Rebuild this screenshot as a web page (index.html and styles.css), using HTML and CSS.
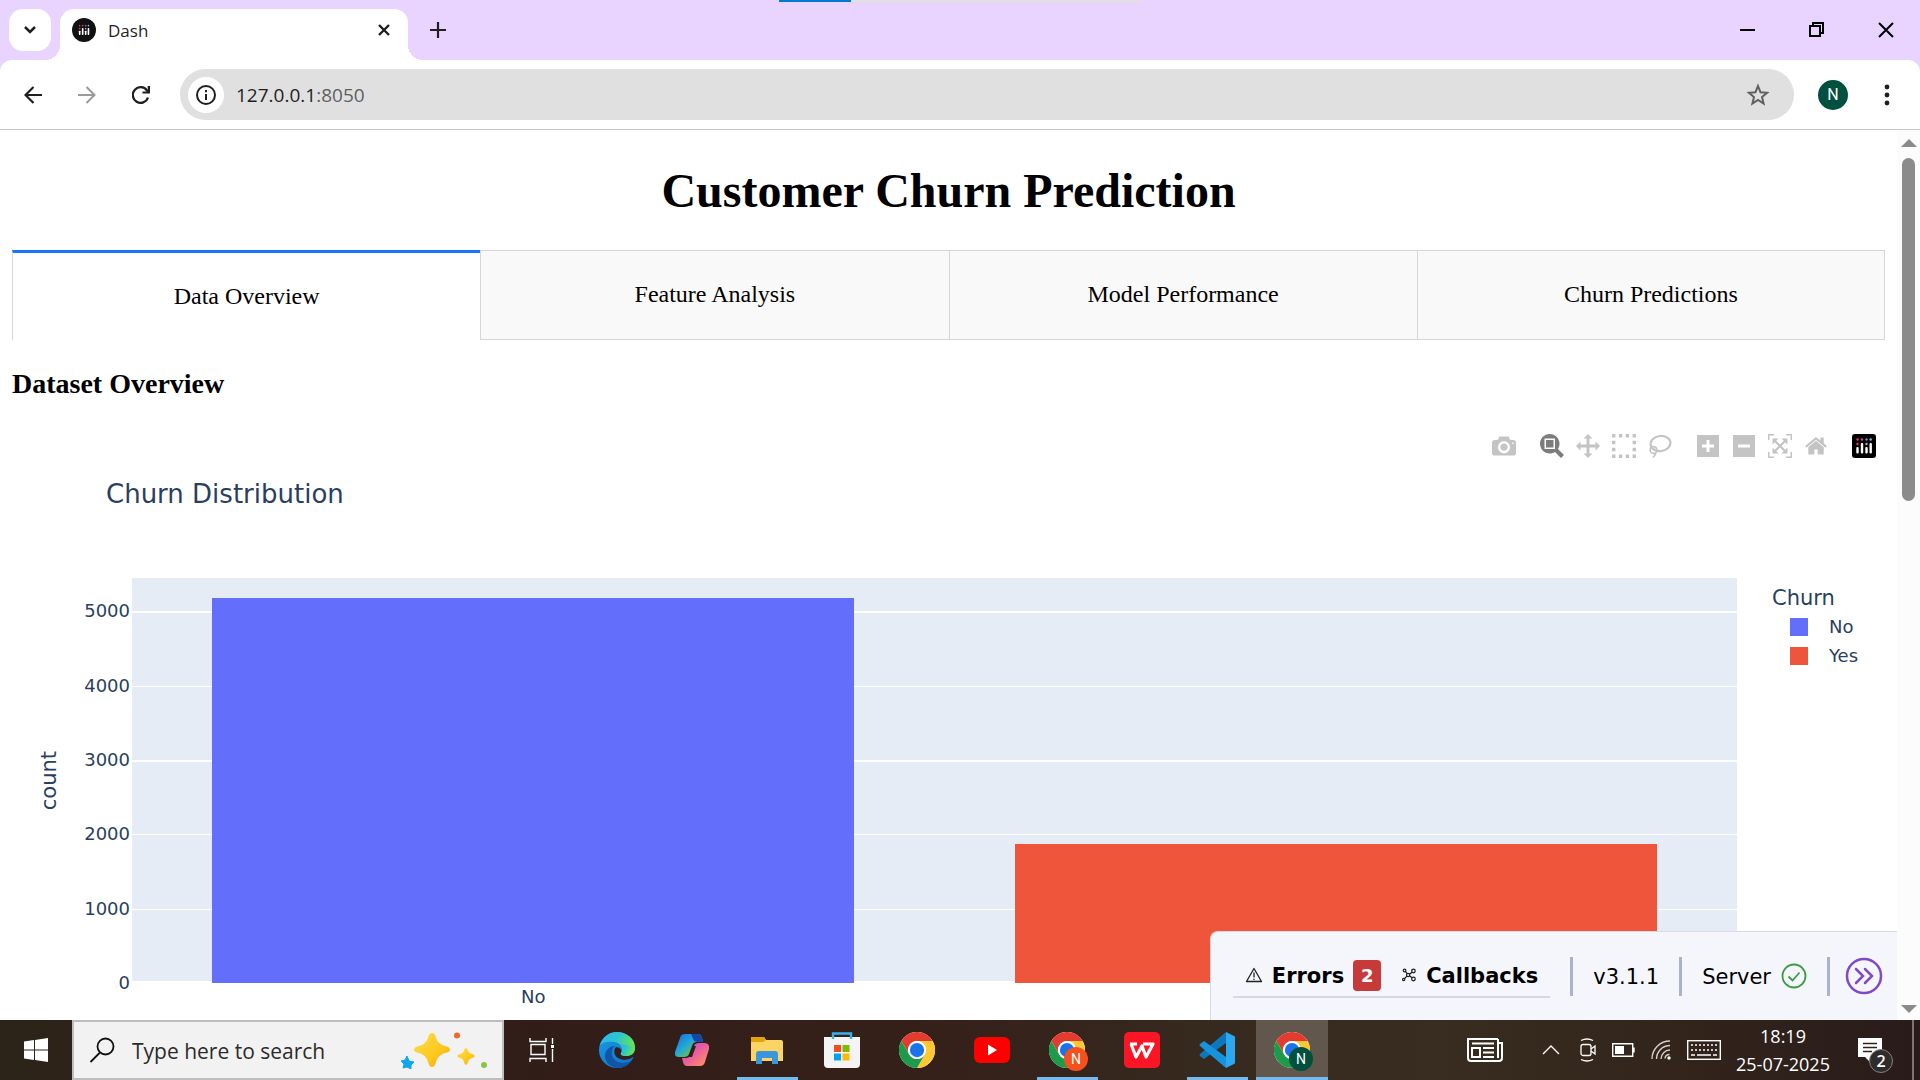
FILE: index.html
```html
<!DOCTYPE html>
<html lang="en">
<head>
<meta charset="utf-8">
<title>Dash</title>
<link rel="stylesheet" href="styles.css">
</head>
<body>
<svg class="defs" aria-hidden="true">
  <symbol id="plotly" viewBox="0 0 24 24">
    <g fill="#e8336d"><circle cx="5.500" cy="5.500" r="1.200"/><circle cx="5.500" cy="10" r="1.200"/></g>
    <circle cx="10" cy="5.500" r="1.200" fill="#c8508c"/><circle cx="14.500" cy="5.500" r="1.200" fill="#9a7ac0"/>
    <circle cx="18.700" cy="5.500" r="1.200" fill="#62cfe8"/><circle cx="14.500" cy="10" r="1.200" fill="#b9a6d8"/>
    <g fill="#fff"><rect x="4.300" y="13" width="2.400" height="6.500" rx="1"/><rect x="8.800" y="9" width="2.400" height="10.500" rx="1"/><rect x="13.300" y="13" width="2.400" height="6.500" rx="1"/><rect x="17.500" y="9" width="2.400" height="10.500" rx="1"/></g>
  </symbol>
  <symbol id="chrome" viewBox="0 0 48 48">
    <circle cx="24" cy="24" r="24" fill="#fff"/>
    <path d="M3.200 12A24 24 0 0 1 44.800 12H24A12 12 0 0 0 13.600 30z" fill="#e33b2e"/>
    <path d="M44.800 12A24 24 0 0 1 24 48L34.400 30A12 12 0 0 0 24 12z" fill="#fcc934"/>
    <path d="M24 48A24 24 0 0 1 3.200 12L13.600 30A12 12 0 0 0 34.400 30z" fill="#1e9a4b"/>
    <circle cx="24" cy="24" r="12" fill="#fff"/><circle cx="24" cy="24" r="9.500" fill="#1a73e8"/>
  </symbol>
</svg>

<header class="browser">
  <div class="load-bar"></div>
  <div class="tab-strip">
    <button class="tab-search" aria-label="Search tabs"><svg width="14" height="10" viewBox="0 0 14 10"><path d="M2 2l5 5 5-5" fill="none" stroke="#1f1f1f" stroke-width="2.500"/></svg></button>
    <div class="browser-tab">
      <svg class="favicon" width="24" height="24" viewBox="0 0 24 24"><circle cx="12" cy="12" r="12" fill="#111"/><use href="#plotly" x="4" y="4" width="16" height="16"/></svg>
      <span class="tab-title">Dash</span>
      <button class="icon-btn" aria-label="Close tab"><svg width="14" height="14" viewBox="0 0 14 14"><path d="M2 2l10 10M12 2L2 12" stroke="#1f1f1f" stroke-width="2.400"/></svg></button>
    </div>
    <button class="icon-btn new-tab" aria-label="New tab"><svg width="16" height="16" viewBox="0 0 16 16"><path d="M8 0v16M0 8h16" stroke="#1f1f1f" stroke-width="2.200"/></svg></button>
    <div class="window-controls">
      <button aria-label="Minimize"><svg width="16" height="16" viewBox="0 0 16 16"><path d="M0 8h15" stroke="#000" stroke-width="2"/></svg></button>
      <button aria-label="Restore"><svg width="16" height="16" viewBox="0 0 16 16"><path d="M1 4h10v10H1zM4 4V1h10v10h-3" fill="none" stroke="#000" stroke-width="2"/></svg></button>
      <button aria-label="Close"><svg width="16" height="16" viewBox="0 0 16 16"><path d="M1 1l14 14M15 1L1 15" stroke="#000" stroke-width="2"/></svg></button>
    </div>
  </div>
  <div class="toolbar">
    <div class="nav-buttons">
      <button class="icon-btn" aria-label="Back"><svg width="18" height="18" viewBox="0 0 18 18"><path d="M18 9H2M9.500 1L1.500 9l8 8" fill="none" stroke="#1f1f1f" stroke-width="2.200"/></svg></button>
      <button class="icon-btn" aria-label="Forward"><svg width="18" height="18" viewBox="0 0 18 18"><path d="M0 9h16M8.500 1l8 8-8 8" fill="none" stroke="#9b9b9b" stroke-width="2"/></svg></button>
      <button class="icon-btn" aria-label="Reload"><svg width="18" height="18" viewBox="0 0 18 18"><path d="M16 11.500A7.800 7.800 0 1 1 15 4.500L16.500 6" fill="none" stroke="#1f1f1f" stroke-width="2.300"/><path d="M18 0v7.500h-7.500V5.400h5.200V0z" fill="#1f1f1f"/></svg></button>
    </div>
    <div class="omnibox">
      <button class="site-info" aria-label="View site information"><svg width="20" height="20" viewBox="0 0 20 20"><circle cx="10" cy="10" r="9" fill="none" stroke="#1f1f1f" stroke-width="2"/><path d="M10 9v6M10 5v2.200" stroke="#1f1f1f" stroke-width="2"/></svg></button>
      <div class="url" role="textbox" aria-label="Address" contenteditable="true" spellcheck="false">127.0.0.1<span class="port">:8050</span></div>
      <button class="icon-btn" aria-label="Bookmark"><svg width="24" height="24" viewBox="0 0 24 24"><path d="M12 3l2.500 6.200 6.600.5-5.100 4.300 1.600 6.500L12 17l-5.600 3.500L8 14 2.900 9.700l6.600-.5z" fill="none" stroke="#5f6063" stroke-width="2"/></svg></button>
    </div>
    <button class="avatar" aria-label="Profile">N</button>
    <button class="icon-btn menu" aria-label="Menu"><svg width="6" height="22" viewBox="0 0 6 22"><g fill="#1f1f1f"><circle cx="3" cy="3" r="2.400"/><circle cx="3" cy="11" r="2.400"/><circle cx="3" cy="19" r="2.400"/></g></svg></button>
  </div>
</header>

<div class="viewport">
  <main class="page">
    <h1>Customer Churn Prediction</h1>
    <nav class="tabs" role="tablist">
      <button class="tab selected" role="tab" aria-selected="true">Data Overview</button>
      <button class="tab" role="tab">Feature Analysis</button>
      <button class="tab" role="tab">Model Performance</button>
      <button class="tab" role="tab">Churn Predictions</button>
    </nav>
    <h3>Dataset Overview</h3>
    <section class="graph">
      <div class="modebar">
        <div class="mode-group">
          <button aria-label="Download plot"><svg width="24" height="24" viewBox="0 0 1000 1000"><path transform="matrix(1 0 0 -1 0 850)" d="m500 450c-83 0-150-67-150-150 0-83 67-150 150-150 83 0 150 67 150 150 0 83-67 150-150 150z m400 150h-120c-16 0-34 13-39 29l-31 93c-6 15-23 28-40 28h-340c-16 0-34-13-39-28l-31-94c-6-15-23-28-40-28h-120c-55 0-100-45-100-100v-450c0-55 45-100 100-100h800c55 0 100 45 100 100v450c0 55-45 100-100 100z m-400-550c-138 0-250 112-250 250 0 138 112 250 250 250 138 0 250-112 250-250 0-138-112-250-250-250z m365 380c-19 0-35 16-35 35 0 19 16 35 35 35 19 0 35-16 35-35 0-19-16-35-35-35z"/></svg></button>
        </div>
        <div class="mode-group">
          <button class="active" aria-label="Zoom"><svg width="24" height="24" viewBox="0 0 1000 1000"><path transform="matrix(1 0 0 -1 0 850)" d="m1000-25l-250 251c40 63 63 138 63 218 0 224-182 406-407 406-224 0-406-182-406-406s183-406 407-406c80 0 155 22 218 62l250-250 125 125z m-812 250l0 438 437 0 0-438-437 0z m62 375l313 0 0-312-313 0 0 312z"/></svg></button>
          <button aria-label="Pan"><svg width="24" height="24" viewBox="0 0 1000 1000"><path transform="matrix(1 0 0 -1 0 850)" d="m1000 350l-187 188 0-125-250 0 0 250 125 0-188 187-187-187 125 0 0-250-250 0 0 125-188-188 186-187 0 125 252 0 0-250-125 0 187-188 188 188-125 0 0 250 250 0 0-126 187 188z"/></svg></button>
          <button aria-label="Box select"><svg width="24" height="24" viewBox="0 0 7 7"><path d="M0 0h1v1H0zM2 0h1v1H2zM4 0h1v1H4zM6 0h1v1H6zM0 2h1v1H0zM6 2h1v1H6zM0 4h1v1H0zM6 4h1v1H6zM0 6h1v1H0zM2 6h1v1H2zM4 6h1v1H4zM6 6h1v1H6z"/></svg></button>
          <button aria-label="Lasso select"><svg width="24" height="24" viewBox="0 0 24 24"><g fill="none" stroke="#c4c4c4"><ellipse cx="12.500" cy="9.500" rx="10" ry="7.600" stroke-width="2.200" transform="rotate(-8 12.500 9.500)"/><circle cx="5.500" cy="16" r="3.400" stroke-width="1.600"/><path d="M8 18q0 2.500-3 5.500" stroke-width="1.600"/></g></svg></button>
        </div>
        <div class="mode-group">
          <button aria-label="Zoom in"><svg width="24" height="24" viewBox="0 0 24 24"><path fill-rule="evenodd" d="M1 1h22v22H1zM10.500 6v4.500H6v3h4.500V18h3v-4.500H18v-3h-4.500V6z"/></svg></button>
          <button aria-label="Zoom out"><svg width="24" height="24" viewBox="0 0 24 24"><path fill-rule="evenodd" d="M1 1h22v22H1zM6 10.500v3h12v-3z"/></svg></button>
          <button aria-label="Autoscale"><svg width="24" height="24" viewBox="0 0 1000 1000"><path transform="matrix(1 0 0 -1 0 850)" d="m250 850l-187 0-63 0 0-62 0-188 63 0 0 188 187 0 0 62z m688 0l-188 0 0-62 188 0 0-188 62 0 0 188 0 62-62 0z m-875-938l0 188-63 0 0-188 0-62 63 0 187 0 0 62-187 0z m875 188l0-188-188 0 0-62 188 0 62 0 0 62 0 188-62 0z m-125 188l-1 0-93-94-156 156 156 156 92-93 2 0 0 250-250 0 0-2 93-92-156-156-156 156 94 92 0 2-250 0 0-250 0 0 93 93 157-156-157-156-93 94 0 0 0-250 250 0 0 0-94 93 156 157 156-157-93-93 0 0 250 0 0 250z"/></svg></button>
          <button aria-label="Reset axes"><svg width="24" height="24" viewBox="-36 0 1000 1000"><path transform="matrix(1 0 0 -1 0 850)" d="m786 296v-267q0-15-11-26t-25-10h-214v214h-143v-214h-214q-15 0-25 10t-11 26v267q0 1 0 2t0 2l321 264 321-264q1-1 1-4z m124 39l-34-41q-5-5-12-6h-2q-7 0-12 3l-386 322-386-322q-7-4-13-4-7 2-12 7l-35 41q-4 5-3 13t6 12l401 334q18 15 42 15t43-15l136-114v109q0 8 5 13t13 5h107q8 0 13-5t5-13v-227l122-102q5-5 6-12t-4-13z"/></svg></button>
        </div>
        <div class="mode-group">
          <a href="#plotly" aria-label="Produced with Plotly"><svg width="24" height="24" viewBox="0 0 24 24"><rect width="24" height="24" rx="3" fill="#000"/><use href="#plotly" width="24" height="24"/></svg></a>
        </div>
      </div>
      <h4>Churn Distribution</h4>
      <div class="chart">
        <div class="y-title">count</div>
        <div class="scale y-ticks"><span>0</span><span>1000</span><span>2000</span><span>3000</span><span>4000</span><span>5000</span></div>
        <div class="plot">
          <div class="scale gridlines"><i></i><i></i><i></i><i></i><i></i><i></i></div>
          <div class="bars">
            <div class="bar no" style="height:95%"></div>
            <div class="bar yes" style="height:34.300%"></div>
          </div>
        </div>
        <div class="legend">
          <div class="legend-title">Churn</div>
          <div class="legend-item"><span class="swatch no"></span>No</div>
          <div class="legend-item"><span class="swatch yes"></span>Yes</div>
        </div>
        <div class="x-ticks"><span>No</span><span>Yes</span></div>
      </div>
    </section>
  </main>

  <aside class="debug-menu">
    <div class="debug-tools">
      <button><svg width="18" height="16" viewBox="0 0 18 16"><path d="M9 1.500L16.500 14.500H1.500z" fill="none" stroke="#222" stroke-width="1.300" stroke-linejoin="round"/><path d="M9 5.500v5M9 11.800v1.200" stroke="#222" stroke-width="1.300"/></svg><span class="label">Errors</span><span class="badge">2</span></button>
      <button><svg width="16" height="16" viewBox="0 0 18 18"><g fill="none" stroke="#222" stroke-width="1.400"><circle cx="8" cy="9" r="1.800"/><circle cx="4" cy="4" r="1.500"/><circle cx="14" cy="4.500" r="2"/><circle cx="14" cy="13.500" r="2"/><circle cx="3" cy="14" r="1.300"/><path d="M5 5l2 2.500M9.500 8l3-2M9.500 10l3 2M6.700 10.300L4 13"/></g></svg><span class="label">Callbacks</span></button>
    </div>
    <span class="divider"></span>
    <span class="label">v3.1.1</span>
    <span class="divider"></span>
    <span class="server"><span class="label">Server</span><svg width="26" height="26" viewBox="0 0 26 26"><circle cx="13" cy="13" r="11.500" fill="none" stroke="#3c9a41" stroke-width="1.800"/><path d="M7.500 13.500l4 4 7-8" fill="none" stroke="#3c9a41" stroke-width="1.800"/></svg></span>
    <span class="divider"></span>
    <button class="collapse" aria-label="Collapse"><svg width="38" height="38" viewBox="0 0 38 38"><circle cx="19" cy="19" r="17" fill="none" stroke="#8149c8" stroke-width="2.500"/><path d="M11 12l7 7-7 7M20 12l7 7-7 7" fill="none" stroke="#8149c8" stroke-width="2.500" stroke-linecap="round"/></svg></button>
  </aside>

  <div class="scrollbar">
    <svg width="16" height="8" viewBox="0 0 16 8"><path d="M8 0l8 8H0z" fill="#8b8b8b"/></svg>
    <div class="track"><div class="thumb"></div></div>
    <svg width="16" height="8" viewBox="0 0 16 8"><path d="M0 0h16L8 8z" fill="#8b8b8b"/></svg>
  </div>
</div>

<footer class="taskbar">
  <button class="start" aria-label="Start"><svg width="24" height="24" viewBox="0 0 24 24"><path d="M0 3.500l10-1.400v9.400H0zM11 2l13-2v11.500H11zM0 12.500h10v9.400L0 20.500zM11 12.500h13V24l-13-1.900z" fill="#fff"/></svg></button>
  <label class="search">
    <svg width="26" height="26" viewBox="0 0 26 26"><circle cx="16.500" cy="9.500" r="8" fill="none" stroke="#111" stroke-width="1.800"/><path d="M11 15.500L1.500 25" stroke="#111" stroke-width="1.800"/></svg>
    <input type="text" placeholder="Type here to search" aria-label="Search">
    <svg width="92" height="38" viewBox="0 0 92 38"><defs><linearGradient id="gold" x2="1" y2="1"><stop offset="0" stop-color="#ffdd50"/><stop offset=".6" stop-color="#fcc81c"/><stop offset="1" stop-color="#f3a515"/></linearGradient></defs><path d="M35 2q3 0 4 5 2 6 9 8 5 1 5 3.500T48 22q-7 2-9 9-1 5-4 5t-4-5q-2-7-9-9-5-1-5-3.500t5-3.500q7-2 9-8 1-5 4-5z" fill="url(#gold)"/><path d="M69 17q1.500 0 2 3 1 2.500 4 3 3 1 3 2t-3 2q-3 .500-4 4-.500 3-2 3t-2-3q-1-3.500-4-4-3-1-3-2t3-2q3-.500 4-3 .500-3 2-3z" fill="url(#gold)"/><path d="M10 25l2 5 5 1-3 3v4l-4-2-4 1 1-4-3-3 4-1z" fill="#10a5ec" stroke="#10a5ec" stroke-linejoin="round"/><circle cx="60" cy="4.500" r="3" fill="#f2672a"/><circle cx="87" cy="34" r="3" fill="#88c540"/></svg>
  </label>
  <nav class="apps">
    <button aria-label="Task view"><svg width="26" height="24" viewBox="0 0 26 24"><g fill="none" stroke="#fff" stroke-width="1.400"><path d="M1 0v3.500h16V0M1 24v-3.500h16V24M2 6.500h14v10H2zM23.500 0v6M23.500 11v13"/></g><path d="M22 7h3v3h-3z" fill="#fff"/></svg></button>
    <button aria-label="Edge"><svg width="36" height="36" viewBox="0 0 36 36"><defs><linearGradient id="e1" x2="1" y2=".4"><stop offset="0" stop-color="#2fb6ef"/><stop offset=".5" stop-color="#2bc3d2"/><stop offset="1" stop-color="#65e54f"/></linearGradient><linearGradient id="e2" y2="1"><stop offset="0" stop-color="#1a9be0"/><stop offset="1" stop-color="#0a6fd0"/></linearGradient></defs><circle cx="18" cy="18" r="18" fill="url(#e2)"/><path d="M1 13C4 4 11 0 18 0c10 0 18 7 18 15 0 6-4 9-9 9-4 0-6-1-5-3 3-4 0-10-7-11C9 9 4 10 1 13z" fill="url(#e1)"/><path d="M16 14c-4 3-4 9-1 13 4 5 12 5 18 1-4 6-9 8-15 8-7-1-12-6-12-12 0-5 4-10 10-10z" fill="#1255a5"/><path d="M17 15c-3 3-2 9 2 11 5 3 11 2 15-1l2 1v-9c0 5-4 7-9 7-4 0-6-1-5-3 1-2 1-5-5-6z" fill="#321e1a"/><path d="M36 15c0 6-4 9-9 9-4 0-6-1-5-3 3-4 0-10-3-10z" fill="url(#e1)"/></svg></button>
    <button aria-label="Copilot"><svg width="34" height="32" viewBox="0 0 34 32"><defs><linearGradient id="c1" y2="1"><stop offset="0" stop-color="#1668dc"/><stop offset=".45" stop-color="#22a9d8"/><stop offset=".7" stop-color="#65bb5a"/><stop offset="1" stop-color="#f1c40f"/></linearGradient><linearGradient id="c2" y2="1"><stop offset="0" stop-color="#a451e0"/><stop offset=".5" stop-color="#ed5f9a"/><stop offset="1" stop-color="#ff9c58"/></linearGradient></defs><path d="M10 0h13q3 0 4 4l1 4h-6q-4 0-5 4l-3 8q-1 3-5 3H4q-5 0-4-5L5 4q1-4 5-4z" fill="url(#c1)"/><path d="M16 0h7q3 0 4 4l1 4h-6l-3-1z" fill="#1447a8"/><path d="M24 9h5q6 0 5 6l-4 13q-1 4-5 4H12q-3 0-4-4l-1-4h4q4 0 5-4l3-8q1-3 5-3z" fill="url(#c2)"/><path d="M18 12h3l-4 11h-3z" fill="#321e1a"/></svg></button>
    <button class="running" aria-label="File Explorer"><svg width="32" height="27" viewBox="0 0 32 27"><path d="M0 1q0-1 1-1h12l2 3h15q2 0 2 2v19H0z" fill="#fcd462"/><path d="M0 1q0-1 1-1h12l2 3-3 2H0z" fill="#e0a30a"/><path d="M5 27V17q0-3 3-3h16q3 0 3 3v10h-6v-6H11v6z" fill="#3a96dd"/></svg></button>
    <button aria-label="Store"><svg width="36" height="36" viewBox="0 0 36 36"><path d="M0 5h36v27q0 4-4 4H4q-4 0-4-4z" fill="#f4f4f4"/><path d="M9 7V1.500h18V7" fill="none" stroke="#35b2ec" stroke-width="2.400"/><path d="M10 13h7v7h-7z" fill="#f25022"/><path d="M18.500 13h7v7h-7z" fill="#7fba00"/><path d="M10 21.500h7v7h-7z" fill="#00a4ef"/><path d="M18.500 21.500h7v7h-7z" fill="#ffb900"/></svg></button>
    <button aria-label="Chrome"><svg width="36" height="36"><use href="#chrome"/></svg></button>
    <button aria-label="YouTube"><svg width="36" height="26" viewBox="0 0 36 26"><rect width="36" height="26" rx="6" fill="#f00"/><path d="M14 7.500l9 5.500-9 5.500z" fill="#fff"/></svg></button>
    <button class="running" aria-label="Chrome, profile N"><svg width="36" height="36"><use href="#chrome"/></svg><span class="profile orange">N</span></button>
    <button aria-label="WPS Office"><svg width="36" height="36" viewBox="0 0 36 36"><rect width="36" height="36" rx="5" fill="#fb1525"/><path d="M7 12l5 13 6-11 4 11 7-13H19M13 12h-7" fill="none" stroke="#fff" stroke-width="3.200" stroke-linejoin="round"/></svg></button>
    <button class="running" aria-label="Visual Studio Code"><svg width="36" height="36" viewBox="0 0 36 36"><path d="M27 0v11L5 27l-4-3q-1-1 0-2z" fill="#0d77bd"/><path d="M27 36V25L5 9l-4 3q-1 1 0 2z" fill="#1593db"/><path d="M27 0l8 4q1 .500 1 1v26q0 .500-1 1l-8 4z" fill="#2aa9f0"/></svg></button>
    <button class="running current" aria-label="Chrome, Dash"><svg width="36" height="36"><use href="#chrome"/></svg><span class="profile green">N</span></button>
  </nav>
  <div class="tray">
    <button aria-label="News"><svg width="36" height="24" viewBox="0 0 36 24"><g fill="none" stroke="#fff" stroke-width="2"><path d="M31 1H1v19q0 3 3 3h28q3 0 3-3V5h-4M31 1v19"/><path d="M5 5.500h22M5 19V10h8v9zM16 10h11M16 14.500h11M16 19h11"/></g></svg></button>
    <button class="expand" aria-label="Hidden icons"><svg width="18" height="10" viewBox="0 0 18 10"><path d="M1 9l8-8 8 8" fill="none" stroke="#fff" stroke-width="1.400"/></svg></button>
    <svg width="16" height="24" viewBox="0 0 16 24"><g fill="none" stroke="#fff" stroke-width="1.300"><path d="M1 2.500q6-3 12 0M1 21.500q6 3 12 0"/><rect x="1" y="6.500" width="10" height="11" rx="2"/><path d="M11 11l4-3v8l-4-3"/></g></svg>
    <svg width="23" height="14" viewBox="0 0 23 14"><path d="M.7.700h20v12.600H.700zM22 4.500v5" fill="none" stroke="#fff" stroke-width="1.400"/><path d="M3 3h9v8H3z" fill="#fff"/></svg>
    <svg width="20" height="20" viewBox="0 0 20 20"><g fill="none" stroke="#d5d0cc" stroke-width="1.400"><path d="M1 19A18 18 0 0 1 19 1M5.500 19A13.500 13.500 0 0 1 19 5.500M10 19a9 9 0 0 1 9-9M14 18.500a4.500 4.500 0 0 1 4.500-4"/></g><circle cx="18" cy="18" r="1.700" fill="#fff"/></svg>
    <svg width="34" height="20" viewBox="0 0 34 20"><rect x=".7" y=".7" width="32.600" height="18.600" fill="none" stroke="#fff" stroke-width="1.400"/><path d="M4 5h26M4 10h26" stroke="#fff" stroke-width="1.500" stroke-dasharray="2 2"/><path d="M4 15h4M10 15h14M26 15h4" stroke="#fff" stroke-width="1.500"/></svg>
  </div>
  <div class="clock"><time>18:19</time><time>25-07-2025</time></div>
  <button class="notifications" aria-label="Notifications"><svg width="24" height="24" viewBox="0 0 24 24"><path d="M0 0h24v19H12v5l-5-5H0z" fill="#fff"/><path d="M5 5.500h14M5 9.500h14M5 13.500h9" stroke="#2f221b" stroke-width="1.300"/></svg><span class="count">2</span></button>
</footer>
</body>
</html>
```
FILE: styles.css
```css
* { box-sizing: border-box; }
body {
  margin: 0;
  height: 100vh;
  display: flex;
  flex-direction: column;
  overflow: hidden;
  background: #fff;
  font-family: "Open Sans", "Noto Sans", sans-serif;
}
button {
  border: 0;
  padding: 0;
  background: none;
  font: inherit;
  color: inherit;
}
svg { display: block; flex: none; }
.defs { position: absolute; width: 0; height: 0; }

/* Browser frame */
.browser { position: relative; background: #e8d4ff; }
.load-bar {
  position: absolute;
  top: 0;
  left: 50%;
  width: 362px;
  height: 2px;
  transform: translateX(-50%);
  background: linear-gradient(90deg, #0078d7 20%, #e1e1e1 20%);
}
.tab-strip { display: flex; align-items: flex-start; height: 60px; padding: 9px 0 0 9px; }
.icon-btn { display: grid; place-items: center; }
.tab-search {
  display: grid;
  place-items: center;
  width: 42px;
  height: 42px;
  margin-right: 9px;
  border-radius: 14px;
  background: #fff;
}
.browser-tab {
  position: relative;
  display: flex;
  align-items: center;
  width: 348px;
  height: 51px;
  padding: 0 17px 9px 12px;
  border-radius: 14px 14px 0 0;
  background: #fff;
}
.browser-tab::before,
.browser-tab::after {
  content: "";
  position: absolute;
  bottom: 0;
  width: 15px;
  height: 15px;
}
.browser-tab::before { right: 100%; background: radial-gradient(circle at 0 0, transparent 15px, #fff 15px); }
.browser-tab::after { left: 100%; background: radial-gradient(circle at 100% 0, transparent 15px, #fff 15px); }
.tab-title { flex: 1; margin-left: 12px; padding-top: 2px; font-size: 17px; line-height: 24px; color: #1f1f1f; }
.new-tab { width: 60px; height: 42px; }
.window-controls { display: flex; margin-left: auto; }
.window-controls button { display: grid; place-items: center; width: 69px; height: 42px; }
.toolbar {
  display: flex;
  align-items: center;
  height: 70px;
  padding: 0 30px 0 24px;
  border-bottom: 1px solid #c7c7c7;
  border-radius: 12px 12px 0 0;
  background: #fff;
}
.nav-buttons { display: flex; gap: 36px; margin-right: 30px; }
.omnibox {
  flex: 1;
  display: flex;
  align-items: center;
  height: 51px;
  padding: 0 24px 0 8px;
  border-radius: 26px;
  background: #e0e0e0;
}
.site-info {
  display: grid;
  place-items: center;
  width: 36px;
  height: 36px;
  margin-right: 12px;
  border-radius: 50%;
  background: #fff;
}
.url { flex: 1; font-size: 19px; line-height: 28px; color: #1f1f1f; }
.port { color: #5f6063; }
.avatar {
  width: 30px;
  height: 30px;
  margin: 0 36px 0 24px;
  border-radius: 50%;
  background: #00503f;
  color: #fff;
  font: 16px/30px Roboto, sans-serif;
}

/* Page */
.viewport { position: relative; flex: 1; min-height: 0; display: flex; }
.page {
  flex: 1;
  min-width: 0;
  overflow: hidden;
  padding: 0 12px;
  font-family: "Liberation Serif", "Times New Roman", serif;
  color: #000;
}
h1 { margin: 33px 0 31px; font-size: 48px; line-height: 56px; text-align: center; }
.tabs { display: grid; grid-template-columns: repeat(4, 1fr); }
.tab {
  height: 90px;
  padding-bottom: 2px;
  border: 1px solid #d6d6d6;
  border-right: 0;
  background: #f9f9f9;
  font-size: 24px;
}
.tab:last-child { border-right: 1px solid #d6d6d6; }
.tab.selected { border-top: 3px solid #1975fa; border-bottom: 0; padding-bottom: 0; background: #fff; }
h3 { margin: 28px 0; font-size: 28px; line-height: 32px; }

/* Plotly figure */
.graph { padding-top: 6px; font-family: "DejaVu Sans", Verdana, sans-serif; color: #2a3f5f; }
.modebar { display: flex; justify-content: flex-end; gap: 24px; padding-right: 9px; }
.mode-group { display: flex; gap: 12px; fill: #c4c4c4; }
.mode-group .active { fill: #7c7c7c; }
h4 { margin: 20px 0 68px 94px; font-size: 26px; line-height: 32px; font-weight: 400; }
.chart {
  display: grid;
  grid-template-columns: 60px 60px 1fr 148px;
  grid-template-rows: 405px 28px;
  font-size: 18px;
  line-height: 24px;
}
.y-title {
  writing-mode: vertical-rl;
  transform: rotate(180deg);
  justify-self: center;
  align-self: center;
  padding-right: 14px;
  font-size: 21px;
}
.scale { display: flex; flex-direction: column-reverse; }
.scale > :not(:first-child) { height: 18.360%; }
.scale > :first-child { height: 0; }
.y-ticks { margin: -12px 0 12px; padding-right: 2px; text-align: right; }
.plot { display: grid; background: #e5ecf6; }
.gridlines, .bars { grid-area: 1 / 1; }
.gridlines i { border-top: 1px solid #fff; }
.gridlines i:nth-child(4),
.gridlines i:nth-child(6) { border-top-width: 2px; }
.gridlines i:first-child { height: 2px; border-top-width: 2px; margin-top: -2px; }
.bars { display: grid; grid-template-columns: 1fr 1fr; align-items: end; justify-items: center; }
.bar { width: 80%; }
.no { background: #636efa; }
.yes { background: #ef553b; }
.x-ticks { grid-column: 3; display: grid; grid-template-columns: 1fr 1fr; padding-top: 2px; text-align: center; }
.legend { padding: 6px 0 0 35px; }
.legend-title { font-size: 21px; line-height: 28px; }
.legend-item { display: flex; align-items: center; height: 29px; padding-left: 18px; }
.swatch { width: 18px; height: 18px; margin-right: 21px; }

/* Dash developer tools */
.debug-menu {
  position: absolute;
  right: 23px;
  bottom: 0;
  display: flex;
  align-items: center;
  height: 89px;
  padding: 0 14px 0 22px;
  border: 1px solid #d7d9e8;
  border-width: 1px 0 0 1px;
  border-radius: 8px 0 0 0;
  background: #f4f6fb;
  font: 21px/28px "DejaVu Sans", Verdana, sans-serif;
  color: #000;
}
.debug-tools { display: flex; gap: 20px; height: 44px; padding: 0 12px; border-bottom: 2px solid #d2dae8; font-weight: 700; }
.debug-tools button { display: flex; align-items: center; gap: 9px; }
.label { padding-top: 2px; }
.badge { width: 28px; border-radius: 4px; background: #c63a3a; color: #fff; font-size: 18px; line-height: 31px; }
.divider { width: 3px; height: 39px; margin: 0 20px; background: #a9b3ce; }
.server { display: flex; align-items: center; gap: 10px; }
.divider:last-of-type { margin-right: 15px; }

.scrollbar { display: flex; flex-direction: column; align-items: center; width: 23px; padding: 9px 0 7px; background: #fcfcfc; }
.track { flex: 1; padding: 11px 0; }
.thumb { width: 13px; height: 41%; border-radius: 7px; background: #8b8b8b; }

/* Windows taskbar */
.taskbar {
  display: flex;
  height: 60px;
  background: linear-gradient(90deg, #2c2319 0, #2f2119 15%, #321d18 30%, #35211a 50%, #36291e 62%, #382d20 75%, #32241b 88%, #291b1a 100%);
  color: #fff;
}
.start { display: grid; place-items: center; width: 72px; }
.search {
  display: flex;
  align-items: center;
  width: 432px;
  padding: 0 13px 0 15px;
  border: 2px solid #bebebe;
  background: #f2f2f2;
}
.search input {
  flex: 1;
  min-width: 0;
  margin-left: 17px;
  padding: 2px 0 0;
  border: 0;
  background: none;
  font: 21px/28px "Open Sans", "Noto Sans", sans-serif;
}
.search input::placeholder { color: #2b2b2b; opacity: 1; }
.apps { display: flex; gap: 3px; margin-left: 2px; }
.apps button { position: relative; display: grid; place-items: center; width: 72px; height: 60px; }
.running::after { content: ""; position: absolute; bottom: 0; left: 6px; right: 5px; height: 3px; background: #76b9ed; }
.current { background: #61574c; }
.current::after { left: 0; right: 0; }
.profile {
  position: absolute;
  left: 33px;
  top: 27px;
  width: 24px;
  height: 24px;
  border-radius: 50%;
  font: 14px/24px Roboto, sans-serif;
}
.orange { background: #f4511e; }
.green { background: #00503f; }
.tray { display: flex; align-items: center; gap: 16px; margin-left: auto; }
.expand { margin: 0 4px 0 23px; }
.clock { display: flex; flex-direction: column; justify-content: center; width: 124px; margin-right: 3px; font-size: 18px; line-height: 28px; text-align: center; }
.notifications { position: relative; display: grid; place-items: center; width: 66px; margin-right: 6px; padding-right: 20px; border-right: 2px solid #7d7570; }
.count {
  position: absolute;
  left: 21px;
  top: 29px;
  width: 24px;
  height: 24px;
  border: 1px solid #85807c;
  border-radius: 50%;
  background: #2f2d2b;
  font-size: 16px;
  line-height: 22px;
  font-weight: 600;
}
```
